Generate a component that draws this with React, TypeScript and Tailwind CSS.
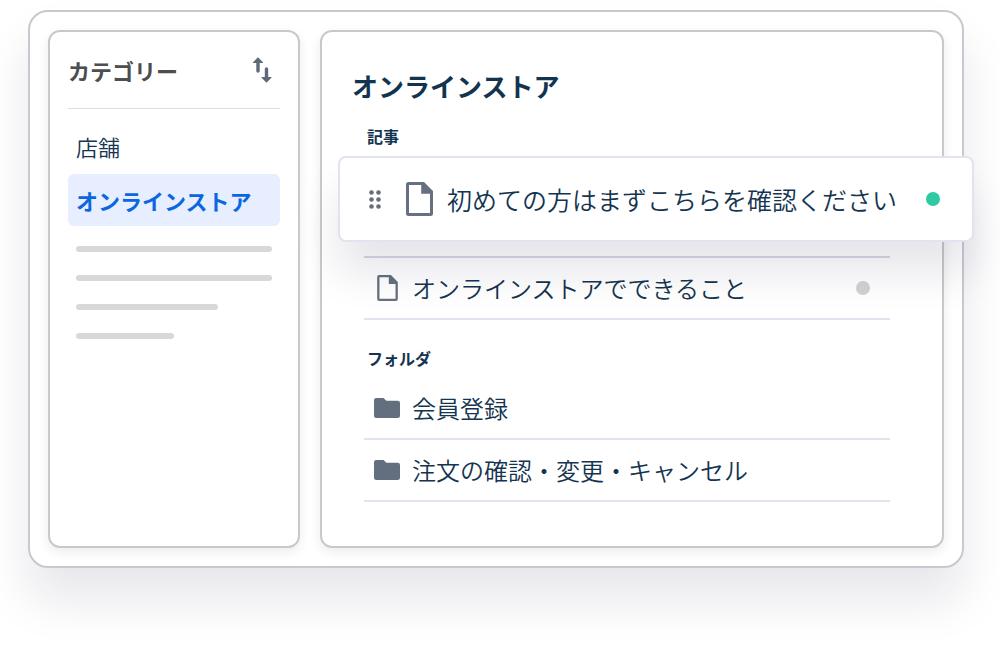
import React from "react";

const SKELETON_WIDTHS = ["w-full", "w-full", "w-[142px]", "w-[98px]"];

function SortIcon() {
  return (
    <svg viewBox="0 0 20 26" className="h-[26px] w-5" fill="#5f6978" aria-hidden="true">
      <path d="M6 0.3 10.9 5.2a.5.5 0 0 1-.4.9H7.7V14a1.7 1.7 0 0 1-3.4 0V6.100H1.500a.5.5 0 0 1-.4-.9Z" />
      <path d="M14.500 25.700 9.600 20.800a.5.5 0 0 1 .4-.9h2.800V12a1.700 1.700 0 0 1 3.400 0v7.900H19a.5.5 0 0 1 .4.9Z" />
    </svg>
  );
}

function GripIcon() {
  return (
    <svg viewBox="0 0 12 19" className="h-[19px] w-3" fill="#666c78" aria-hidden="true">
      {[2.5, 9.5, 16.5].map((y) => (
        <g key={y}>
          <circle cx="2.500" cy={y} r="2.300" />
          <circle cx="9.500" cy={y} r="2.300" />
        </g>
      ))}
    </svg>
  );
}

function FileIcon({ className }: { className: string }) {
  return (
    <svg viewBox="0 0 27 34" className={className} fill="#667080" aria-hidden="true">
      <path
        fillRule="evenodd"
        d="M2.500 0H18l9 9V31.500a2.500 2.500 0 0 1-2.500 2.500H2.500A2.500 2.500 0 0 1 0 31.500V2.500A2.500 2.500 0 0 1 2.500 0Zm.5 3v28h21V11.800H15.200V3Z"
      />
    </svg>
  );
}

function FolderIcon() {
  return (
    <svg viewBox="0 0 26 20" className="h-5 w-[26px]" fill="#636e7e" aria-hidden="true">
      <path d="M2.300 0h7.200l2.900 2.700h11.300A2.300 2.300 0 0 1 26 5v12.700a2.300 2.300 0 0 1-2.300 2.300H2.300A2.300 2.300 0 0 1 0 17.700V2.300A2.300 2.300 0 0 1 2.300 0Z" />
    </svg>
  );
}

function Row({ icon, label, children }: { icon: React.ReactNode; label: string; children?: React.ReactNode }) {
  return (
    <li className="flex items-center border-b-2 border-[#e2e3ee] py-3 pr-5 pl-[10px]">
      <span className="flex w-[26px] justify-center">{icon}</span>
      <a href="#" className="ml-3 flex-1 text-2xl leading-9 font-[350]">
        {label}
      </a>
      {children}
    </li>
  );
}

export default function App() {
  return (
    <div className="overflow-hidden bg-white pt-[10px] pr-9 pb-20 pl-7 font-['Noto_Sans_CJK_JP',sans-serif] text-[#14344f]">
      <div className="flex gap-5 rounded-[20px] border-2 border-[#c8c8d0] bg-white p-[18px] shadow-[0_32px_48px_rgba(20,20,60,0.1)]">
        <aside className="w-[252px] shrink-0 rounded-xl border-2 border-[#c9c9c9] bg-white px-[18px] shadow-[0_4px_12px_rgba(0,0,0,0.08)]">
          <header className="flex items-center justify-between border-b border-[#dcdfe6] py-5 pr-2">
            <h2 className="text-[22px] leading-9 font-bold text-[#4c4e50]">カテゴリー</h2>
            <button type="button" aria-label="並べ替え">
              <SortIcon />
            </button>
          </header>
          <nav className="mt-[11px] flex flex-col gap-[2px] text-[22px] leading-9">
            <a href="#" className="block px-2 py-2 font-[350]">
              店舗
            </a>
            <a
              href="#"
              aria-current="page"
              className="block rounded-md bg-[#e6eeff] px-2 py-2 font-bold text-[#0b66e0]"
            >
              オンラインストア
            </a>
          </nav>
          <div className="mt-5 flex flex-col gap-[23px] px-2" aria-hidden="true">
            {SKELETON_WIDTHS.map((width, i) => (
              <div key={i} className={`h-[6px] rounded-full bg-[#d8d8d8] ${width}`} />
            ))}
          </div>
        </aside>

        <main className="min-w-0 flex-1 rounded-xl border-2 border-[#c9c9c9] bg-white pt-9 pr-[52px] pb-11 pl-[42px] shadow-[0_4px_12px_rgba(0,0,0,0.08)]">
          <h1 className="-ml-3 text-[26px] leading-9 font-bold text-[#12344f]">オンラインストア</h1>

          <h2 className="mt-5 pl-[3px] text-base leading-6 font-bold">記事</h2>
          <ul className="mt-2">
            <li className="border-b-2 border-[#d8d8e8] pb-[14px]">
              <div className="relative -mr-[84px] -ml-[26px] flex items-center rounded-lg border-2 border-[#e1e3ee] bg-white py-[23px] pr-8 pl-[29px] shadow-[0_32px_40px_rgba(20,20,60,0.1)]">
                <button type="button" aria-label="ドラッグして移動">
                  <GripIcon />
                </button>
                <FileIcon className="ml-[25px] h-[34px] w-[27px]" />
                <a href="#" className="ml-[14px] flex-1 text-[25px] leading-9 font-[350] whitespace-nowrap">
                  初めての方はまずこちらを確認ください
                </a>
                <span className="size-[14px] rounded-full bg-[#2fc9a2]" />
              </div>
            </li>
            <Row icon={<FileIcon className="h-[26px] w-[21px]" />} label="オンラインストアでできること">
              <span className="size-[14px] rounded-full bg-[#d2d2d2]" />
            </Row>
          </ul>

          <h2 className="mt-[26px] pl-[3px] text-base leading-6 font-bold">フォルダ</h2>
          <ul className="mt-2">
            <Row icon={<FolderIcon />} label="会員登録" />
            <Row icon={<FolderIcon />} label="注文の確認・変更・キャンセル" />
          </ul>
        </main>
      </div>
    </div>
  );
}
